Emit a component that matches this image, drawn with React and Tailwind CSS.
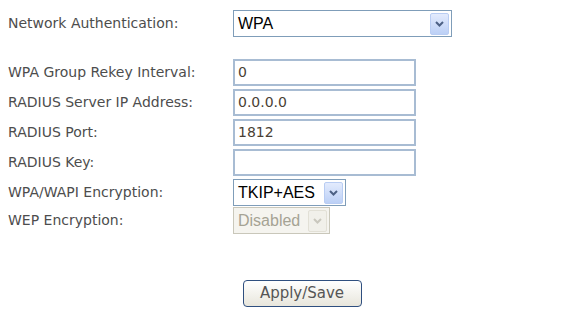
import React from "react";

const labelFont = { fontFamily: "Tahoma, 'DejaVu Sans', Verdana, sans-serif" };

function Arrow({ disabled }) {
  return (
    <div
      className={`flex items-center justify-center w-[19px] h-[22px] border rounded-[2px] ${
        disabled
          ? "border-[#e2e0d6] bg-[#f1f0ea]"
          : "border-[#b9cdf3] bg-gradient-to-b from-[#e3ebfd] to-[#bcd0f6]"
      }`}
    >
      <svg width="9" height="6" viewBox="0 0 9 6">
        <path
          d="M1 1 L4.5 4.5 L8 1"
          fill="none"
          stroke={disabled ? "#c9c7bd" : "#4d6185"}
          strokeWidth="2"
        />
      </svg>
    </div>
  );
}

function Select({ value, width, disabled }) {
  return (
    <div
      className={`flex items-center justify-between border pl-[4px] pr-[2px] h-[27px] ${width} ${
        disabled ? "border-[#c9c7ba] bg-[#f5f4ef] text-[#a5a394]" : "border-[#7f9db9] bg-white text-black"
      }`}
    >
      <span className="text-[16px] leading-none" style={{ fontFamily: "'Liberation Sans', Arial, sans-serif" }}>
        {value}
      </span>
      <Arrow disabled={disabled} />
    </div>
  );
}

function TextInput({ value }) {
  return (
    <div
      className="flex items-center border-2 border-[#a8bcd3] bg-white w-[183px] h-[27px] px-[3px] text-[14px] text-[#4a3f35]"
      style={labelFont}
    >
      {value}
    </div>
  );
}

const rows = [
  ["WPA Group Rekey Interval:", <TextInput value="0" />],
  ["RADIUS Server IP Address:", <TextInput value="0.0.0.0" />],
  ["RADIUS Port:", <TextInput value="1812" />],
  ["RADIUS Key:", <TextInput value="" />],
];

export default function App() {
  return (
    <div className="w-[568px] h-[317px] bg-white pl-[8px] pt-[10px] text-[#4d4d4d]" style={labelFont}>
      {/* 認証方式 */}
      <div className="flex items-center h-[27px]">
        <div className="w-[225px] text-[14px]">Network Authentication:</div>
        <Select value="WPA" width="w-[219px]" />
      </div>

      <div className="mt-[22px] flex flex-col gap-[3px]">
        {rows.map(([label, ctrl]) => (
          <div key={label} className="flex items-center h-[27px]">
            <div className="w-[225px] text-[14px]">{label}</div>
            {ctrl}
          </div>
        ))}
        <div className="flex items-center h-[27px]">
          <div className="w-[225px] text-[14px]">WPA/WAPI Encryption:</div>
          <Select value="TKIP+AES" width="w-[113px]" />
        </div>
        <div className="flex items-center h-[27px] -mt-[2px]">
          <div className="w-[225px] text-[14px]">WEP Encryption:</div>
          <Select value="Disabled" width="w-[97px]" disabled />
        </div>
      </div>

      <div className="flex justify-center pl-[28px] mt-[46px]">
        <button
          className="w-[119px] h-[27px] rounded-[4px] border border-[#2f4f7f] bg-gradient-to-b from-[#ffffff] to-[#e8e6dc] text-[15px] text-[#555]"
          style={labelFont}
        >
          Apply/Save
        </button>
      </div>
    </div>
  );
}
